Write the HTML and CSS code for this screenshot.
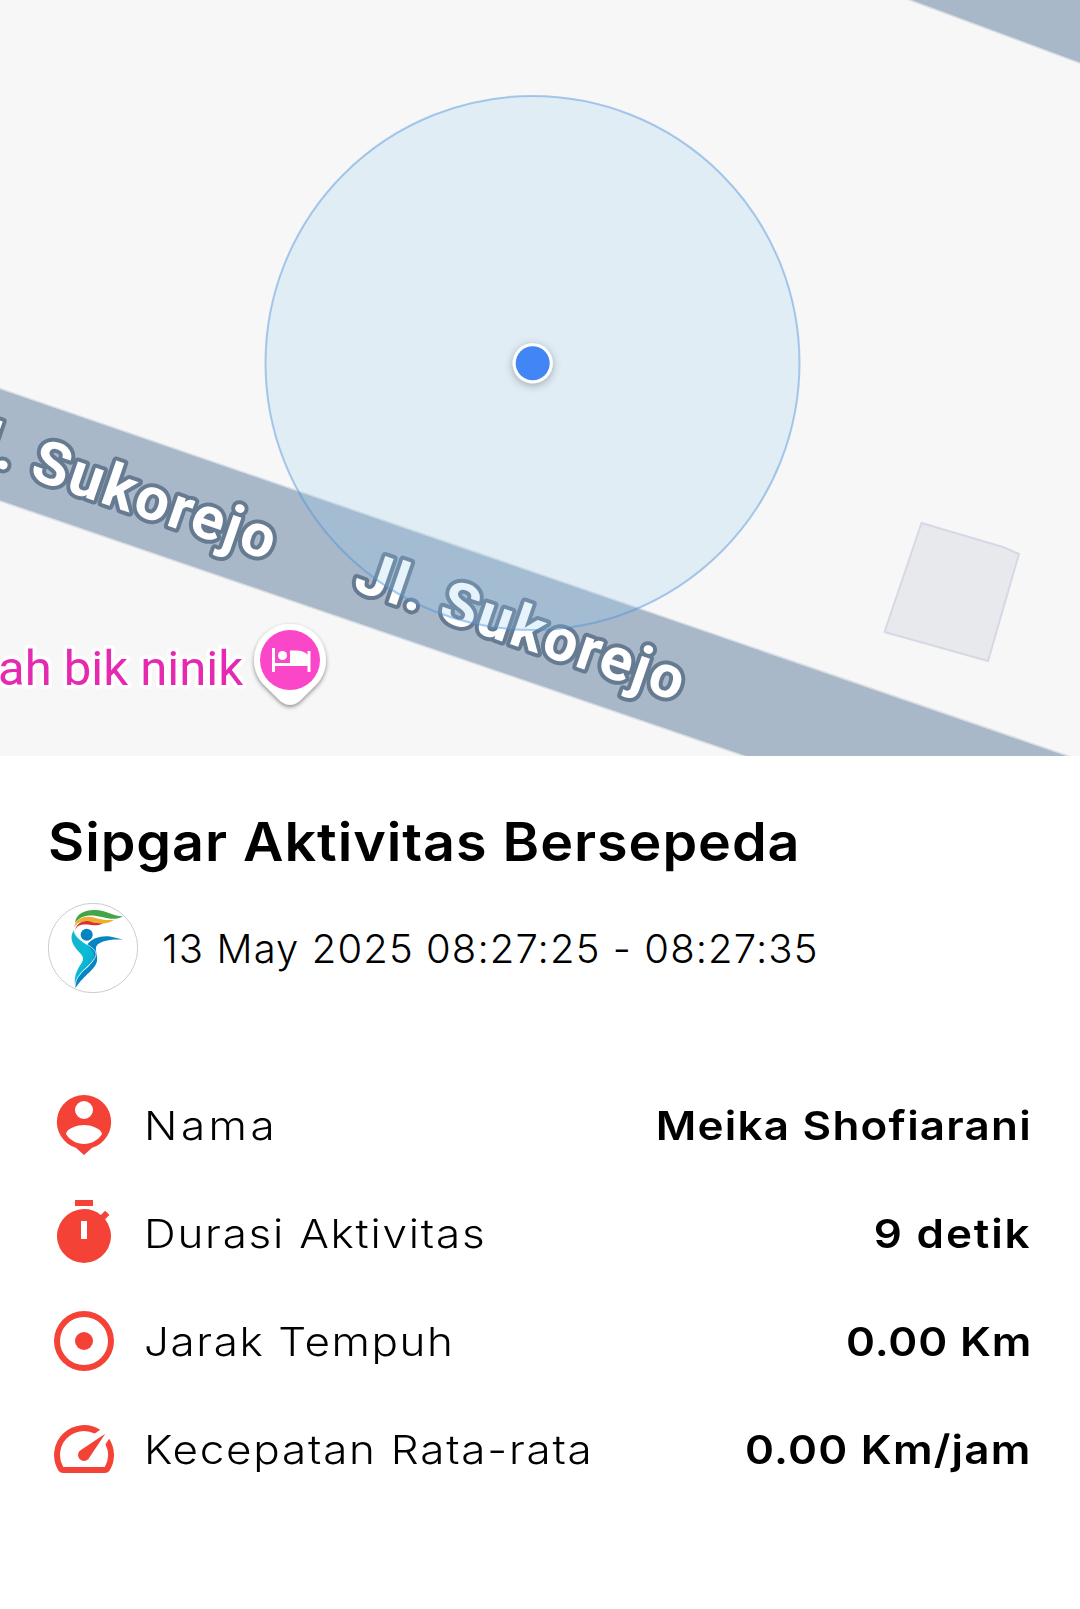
FILE: index.html
```
<!DOCTYPE html>
<html lang="id">
<head>
<meta charset="utf-8">
<meta name="viewport" content="width=device-width, initial-scale=1">
<title>Sipgar Aktivitas Bersepeda</title>
<link rel="stylesheet" href="styles.css">
</head>
<body>
<svg class="map" viewBox="0 0 1080 756">
  <defs>
    <filter id="pinShadow" x="-30%" y="-30%" width="160%" height="160%">
      <feDropShadow dx="0" dy="2" stdDeviation="2" flood-color="#000" flood-opacity=".45"/>
    </filter>
    <filter id="dotShadow" x="-50%" y="-50%" width="200%" height="200%">
      <feDropShadow dx="0" dy="2" stdDeviation="4" flood-color="#000" flood-opacity=".3"/>
    </filter>
  </defs>

  <!-- roads -->
  <path class="road" d="M-5 387.5L1085 762.5V872L-5 498.500z"/>
  <path class="road" d="M909 -1L1083 63.5V-1z"/>

  <!-- building -->
  <path class="building" d="M921.500 523L986 542 1003 547 1019 554 988 661 884.5 632z"/>

  <!-- street names -->
  <text class="street" transform="translate(-57 448.5) rotate(19)" textLength="344">Jl. Sukorejo</text>
  <text class="street" transform="translate(351.5 589.5) rotate(19)" textLength="344">Jl. Sukorejo</text>

  <!-- guest house -->
  <text class="place" x="-2" y="685" textLength="245">ah bik ninik</text>
  <path class="pin" filter="url(#pinShadow)" d="M290 624a36 36 0 0 1 27 59.8L299 701.5Q290 708.500 281 701.500L263 683.800A36 36 0 0 1 290 624z"/>
  <circle class="pin-fill" cx="290" cy="660" r="30"/>
  <path class="bed" d="M272 648h3v15h15v-12.500h5q10 0 12.500 4.500h-2.500 2.500v-4h3v21h-3v-6H275v6h-3z"/>
  <circle class="bed" cx="282.500" cy="655.500" r="4.500"/>

  <!-- current position -->
  <circle class="accuracy" cx="532.5" cy="363" r="267"/>
  <circle class="dot-ring" filter="url(#dotShadow)" cx="532.7" cy="363.3" r="20"/>
  <circle class="dot" cx="532.7" cy="363.3" r="17"/>
</svg>

<div class="content">
  <h1>Sipgar Aktivitas Bersepeda</h1>

  <div class="date">
    <svg class="logo" viewBox="0 0 90 90">
      <defs>
        <linearGradient id="teal" x1="0" y1="0" x2="1" y2="1">
          <stop offset="0" stop-color="#12b5c8"/>
          <stop offset=".5" stop-color="#0bbcd6"/>
          <stop offset="1" stop-color="#0a94c8"/>
        </linearGradient>
      </defs>
      <circle cx="45" cy="45" r="44.700" fill="#fff" stroke="#aaa" stroke-width=".6"/>
      <path fill="#43a547" d="M27 20C28 10 38 6.500 48 7C60 8 63 12.500 75 13.500C68 17 62 16 54 14C42 11 33 12 27 20z"/>
      <path fill="#f0ae2d" d="M26 24.500C28 14 39 12.500 46 14.500C54 17.500 60 17 66 17C60 21 53 21 46 19.500C37 17 30 18 26 24.500z"/>
      <path fill="#dc3030" d="M27 27.500C29 19 36 17 42 18.500C47 20.500 51 20 55 20.500C50 23 44 22.500 40 21.500C33 21 29 22 27 27.500z"/>
      <circle cx="38.700" cy="31.800" r="6" fill="#0483c2"/>
      <path fill="url(#teal)" d="M26 27C21 34 24 42 31 49C36 54 36 56 33 61C28 68 26 74 27 83C29 72 36 67 43 60C50 51 48 48 41 43C33 38 27 34 26 27z"/>
      <path fill="#0785c0" d="M39 42C44 35 53 32.500 62 33.500L75 36.500C65 36 52 37 48.500 43C46.500 47 50 51 49 58C47 67 37 71 27.500 85C26 76 33 70 40 64C48 56 49 50 39 42z"/>
      <path fill="none" stroke="#fff" stroke-width=".7" d="M26 28C28 39 49 43 48 52C46 62 28 68 27 83"/>
    </svg>
    <span>13 May 2025 08:27:25 - 08:27:35</span>
  </div>

  <div class="stats">
    <div class="row">
      <svg class="icon" viewBox="0 0 24 24"><path fill-rule="evenodd" d="M12 2a9 9 0 0 0-2.700 17.600L12 22l2.700-2.400A9 9 0 0 0 12 2zm0 2a3 3 0 1 1 0 6 3 3 0 0 1 0-6zM6 15.080C6.030 13.090 10 12 12 12s5.970 1.090 6 3.080c-1.290 1.940-3.500 3.220-6 3.220s-4.710-1.280-6-3.220z"/></svg>
      <span class="label label-name">Nama</span>
      <span class="value">Meika Shofiarani</span>
    </div>
    <div class="row">
      <svg class="icon" viewBox="0 0 24 24"><path d="M9 1h6v2H9zM19.030 7.390l1.420-1.420c-.43-.51-.9-.99-1.410-1.410l-1.420 1.420A8.960 8.960 0 0 0 12 4a9 9 0 1 0 7.030 3.390zM13 14h-2V8h2z"/></svg>
      <span class="label">Durasi Aktivitas</span>
      <span class="value value-time">9 detik</span>
    </div>
    <div class="row">
      <svg class="icon" viewBox="0 0 24 24"><circle cx="12" cy="12" r="3"/><path d="M12 2a10 10 0 1 0 0 20 10 10 0 0 0 0-20zm0 18a8 8 0 1 1 0-16 8 8 0 0 1 0 16z"/></svg>
      <span class="label label-distance">Jarak Tempuh</span>
      <span class="value value-distance">0.00 Km</span>
    </div>
    <div class="row">
      <svg class="icon" viewBox="0 0 24 24"><path d="M20.380 8.570l-1.230 1.850a8 8 0 0 1-.22 7.580H5.070A8 8 0 0 1 15.580 6.850l1.850-1.230A10 10 0 0 0 3.350 19a2 2 0 0 0 1.720 1h13.850a2 2 0 0 0 1.740-1 10 10 0 0 0-.27-10.440zm-9.790 6.840a2 2 0 0 0 2.830 0l5.660-8.490-8.490 5.660a2 2 0 0 0 0 2.830z"/></svg>
      <span class="label">Kecepatan Rata-rata</span>
      <span class="value">0.00 Km/jam</span>
    </div>
  </div>
</div>
</body>
</html>
```
FILE: styles.css
```
body {
  margin: 0;
  background-color: #fff;
  color: #000;
  font-family: Inter, "Open Sans", sans-serif;
}
.map {
  display: block;
  width: 100%;
  height: 756px;
  background-color: #f7f7f7;
  overflow: hidden;
}
.road {
  fill: #a9b8c9;
  stroke: rgba(169, 184, 201, .4);
  stroke-width: 3;
}
.building {
  fill: #e8e9ed;
  stroke: #d6d8e6;
  stroke-width: 2;
  stroke-linejoin: round;
}
.street {
  font-family: Roboto, sans-serif;
  font-size: 60px;
  font-weight: 700;
  fill: #fff;
  stroke: #667a91;
  stroke-width: 8;
  stroke-linejoin: round;
  paint-order: stroke;
}
.place {
  font-family: Roboto, sans-serif;
  font-size: 49px;
  fill: #e629b1;
  stroke: #fff;
  stroke-width: 7;
  stroke-linejoin: round;
  paint-order: stroke;
}
.pin, .bed {
  fill: #fff;
}
.pin-fill {
  fill: #fa46c8;
}
.accuracy {
  fill: rgba(148, 204, 239, .23);
  stroke: rgba(74, 144, 217, .45);
  stroke-width: 2;
}
.dot-ring {
  fill: #fff;
}
.dot {
  fill: #4285f4;
}
.content {
  padding: 54px 48px 0;
}
h1 {
  margin: 0;
  height: 66px;
  line-height: 65px;
  font-size: 53px;
  font-weight: 600;
  letter-spacing: 0.9px;
  white-space: nowrap;
  transform: scaleX(1.05);
  transform-origin: left;
}
.date {
  display: flex;
  align-items: center;
  gap: 24px;
  margin-top: 27px;
  height: 90px;
  font-size: 40px;
  font-weight: 350;
  letter-spacing: 1.1px;
  white-space: nowrap;
}
.logo {
  width: 90px;
  height: 90px;
}
.stats {
  margin-top: 78px;
}
.row {
  display: flex;
  align-items: center;
  height: 108px;
  font-size: 40px;
  letter-spacing: 1.1px;
  white-space: nowrap;
}
.icon {
  width: 72px;
  height: 72px;
  margin-right: 24px;
  fill: #f44336;
}
/* labels and values are set a little wider than the font */
.label {
  font-weight: 350;
  letter-spacing: 1.6px;
  transform: scaleX(1.1);
  transform-origin: left;
}
.label-name {
  letter-spacing: 3.2px;
}
.label-distance {
  letter-spacing: 1.45px;
}
.value {
  margin-left: auto;
  font-weight: 600;
  transform: scaleX(1.1);
  transform-origin: right;
}
.value-time {
  letter-spacing: 1.7px;
}
.value-distance {
  letter-spacing: 0.75px;
}
```
